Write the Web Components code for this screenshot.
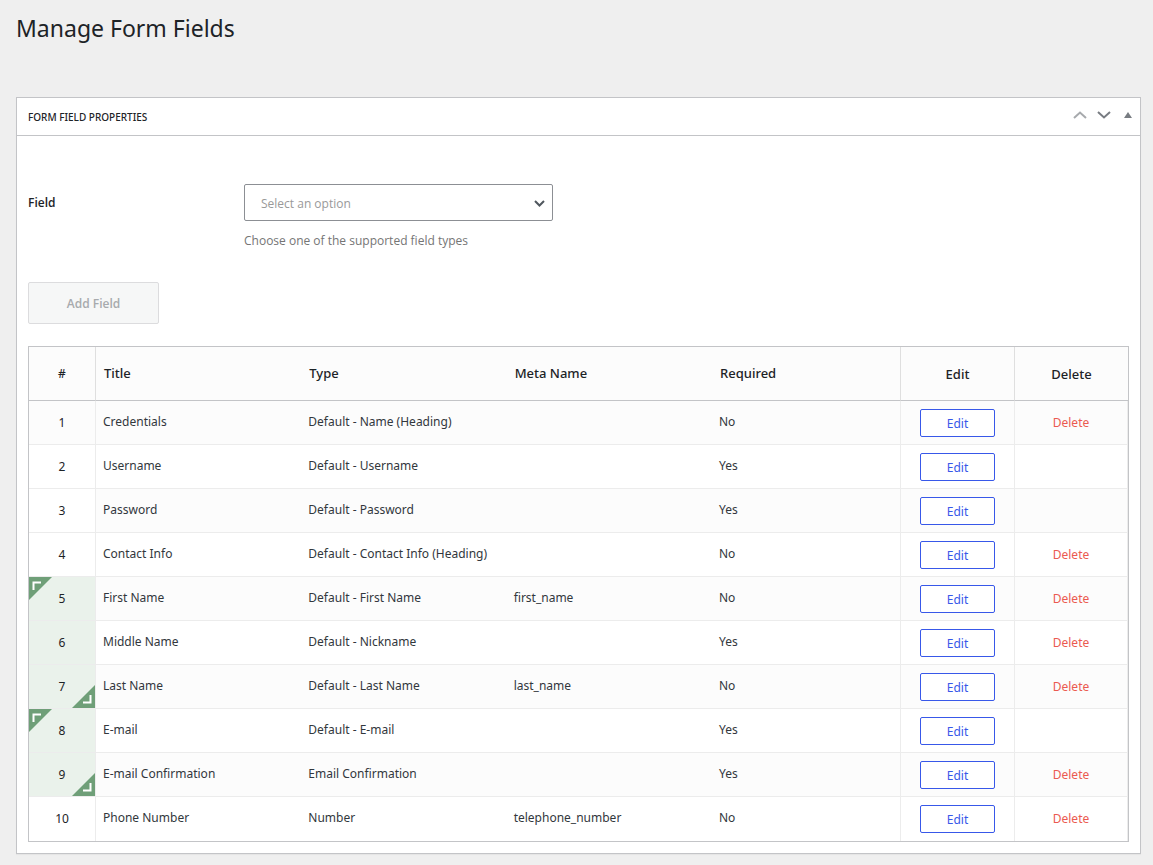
<!DOCTYPE html>
<html lang="en">
<head>
<meta charset="utf-8">
<title>Manage Form Fields</title>
<style>
  body { margin: 0; padding: 12px 12px 12px 16px; background: #efefef; color: #1d2327; font: 12px/20px "Noto Sans", "Open Sans", sans-serif; }
</style>
</head>
<body>
<page-heading>Manage Form Fields</page-heading>
<meta-box>
  <span slot="title">Form Field Properties</span>
  <field-picker></field-picker>
  <field-table></field-table>
</meta-box>

<script>
const define = (name, html, setup) => {
  const template = document.createElement('template');
  template.innerHTML = html;
  customElements.define(name, class extends HTMLElement {
    constructor() {
      super();
      this.attachShadow({ mode: 'open' }).append(template.content.cloneNode(true));
      if (setup) setup(this.shadowRoot);
    }
  });
};

define('page-heading', `
  <style>
    :host { display: block; margin-bottom: 53px; }
    h1 { margin: 0; font-size: 23px; font-weight: 400; line-height: 32px; }
  </style>
  <h1><slot></slot></h1>`);

define('meta-box', `
  <style>
    :host { display: block; background: #fff; border: 1px solid #c3c4c7; box-shadow: 0 1px 1px rgba(0,0,0,.04); }
    header { display: flex; align-items: center; justify-content: space-between; height: 37px; padding: 0 2px 0 11px; border-bottom: 1px solid #c3c4c7; }
    h2 { margin: 0; font-size: 10px; font-weight: 500; line-height: 20px; text-transform: uppercase; }
    .handles { display: flex; gap: 4px; padding-bottom: 3px; }
    button { display: grid; place-items: center; width: 20px; height: 20px; padding: 0; border: 0; background: none; color: #787c82; }
    button:disabled { color: #a7aaad; }
    .body { padding: 48px 11px 11px; }
  </style>
  <header>
    <h2><slot name="title"></slot></h2>
    <div class="handles">
      <button disabled aria-label="Move up"><svg width="14" height="8" viewBox="0 0 14 8" fill="none" stroke="currentColor" stroke-width="2"><path d="M1 7l6-5.500 6 5.500"/></svg></button>
      <button aria-label="Move down"><svg width="14" height="8" viewBox="0 0 14 8" fill="none" stroke="currentColor" stroke-width="2"><path d="M1 1l6 5.500 6-5.500"/></svg></button>
      <button aria-label="Toggle panel"><svg width="8" height="6" viewBox="0 0 8 6" fill="currentColor"><path d="M4 0l4 6H0z"/></svg></button>
    </div>
  </header>
  <div class="body"><slot></slot></div>`);

define('field-picker', `
  <style>
    :host { display: block; margin-bottom: 22px; font-family: "Open Sans", "Noto Sans", sans-serif; }
    .row { display: grid; grid-template-columns: 216px 309px; margin-bottom: 31px; }
    label { font-weight: 600; line-height: 37px; }
    .select { display: grid; position: relative; }
    select { appearance: none; box-sizing: border-box; width: 100%; height: 37px; margin: 0; padding: 2px 32px 0 16px; border: 1px solid #8c8f94; border-radius: 2px; background: #fff; color: #999; font: inherit; }
    svg { position: absolute; right: 8px; top: 16px; }
    p { margin: 10px 0 0; color: #757575; }
    .add { box-sizing: border-box; display: block; width: 131px; height: 42px; padding: 2px 0 0; border: 1px solid #dcdcde; border-radius: 2px; background: #f6f7f7; color: #a7aaad; font: inherit; font-weight: 600; }
  </style>
  <div class="row">
    <label for="field">Field</label>
    <div>
      <div class="select">
        <select id="field"><option>Select an option</option></select>
        <svg width="11" height="7" viewBox="0 0 11 7" fill="none" stroke="#50575e" stroke-width="2"><path d="M1 1l4.500 4.500L10 1"/></svg>
      </div>
      <p>Choose one of the supported field types</p>
    </div>
  </div>
  <button class="add" disabled>Add Field</button>`);

const fields = [
  ['Credentials', 'Default - Name (Heading)', '', 'No', true],
  ['Username', 'Default - Username', '', 'Yes', false],
  ['Password', 'Default - Password', '', 'Yes', false],
  ['Contact Info', 'Default - Contact Info (Heading)', '', 'No', true],
  ['First Name', 'Default - First Name', 'first_name', 'No', true, 'group start'],
  ['Middle Name', 'Default - Nickname', '', 'Yes', true, 'group'],
  ['Last Name', 'Default - Last Name', 'last_name', 'No', true, 'group end'],
  ['E-mail', 'Default - E-mail', '', 'Yes', false, 'group start'],
  ['E-mail Confirmation', 'Email Confirmation', '', 'Yes', true, 'group end'],
  ['Phone Number', 'Number', 'telephone_number', 'No', true],
];
const corner = `<svg width="23" height="23" viewBox="0 0 23 23"><path d="M0 0h23L0 23z" fill="#6f9f78"/><path d="M4.500 13V5.500H12" fill="none" stroke="#fff" stroke-width="2"/></svg>`;

define('field-table', `
  <style>
    :host { display: block; }
    table { box-sizing: border-box; width: 100%; table-layout: fixed; border: 1px solid #c3c4c7; border-collapse: separate; border-spacing: 0; }
    .num { width: 67px; } .req { width: 189px; } .edit { width: 114px; } .del { width: 113px; }
    th, td { box-sizing: border-box; text-align: left; }
    th { height: 54px; padding: 0 8px 2px; background: #fcfcfc; border-bottom: 1px solid #c3c4c7; font-size: 13px; font-weight: 500; }
    td { height: 44px; padding: 0 7px 2px; border-bottom: 1px solid #ececec; color: #32373c; }
    tbody tr:nth-child(odd) { background: #fcfcfc; }
    tbody tr:last-child td { border-bottom: 0; }
    th:first-child, td:first-child, th:nth-child(n+6), td:nth-child(n+6) { padding: 0; text-align: center; }
    th:first-child { font-size: 12px; }
    td:first-child { background: #fff; color: #1d2327; }
    tbody tr:first-child td:first-child { background: #fcfcfc; }
    th:first-child, td:first-child, th:nth-child(n+5), td:nth-child(n+5) { border-right: 1px solid #ececec; }
    th:first-child, th:nth-child(n+5) { border-right-color: #dfdfdf; }
    th:last-child { border-right: 0; }
    .group td:first-child { position: relative; background: #eaf2eb; }
    .group svg { position: absolute; left: 0; top: 0; }
    .end svg { left: auto; right: 0; top: auto; bottom: 0; transform: rotate(180deg); }
    a { display: block; text-decoration: none; }
    .btn { box-sizing: border-box; width: 75px; height: 28px; margin: 0 auto; border: 1px solid #3858e9; border-radius: 2px; background: #fff; color: #3858e9; line-height: 27px; }
    .remove { color: #eb5a50; }
  </style>
  <table>
    <colgroup><col class="num"><col><col><col><col class="req"><col class="edit"><col class="del"></colgroup>
    <thead><tr><th>#</th><th>Title</th><th>Type</th><th>Meta Name</th><th>Required</th><th>Edit</th><th>Delete</th></tr></thead>
    <tbody></tbody>
  </table>`, root => {
  root.querySelector('tbody').innerHTML = fields.map(([title, type, meta, required, removable, group = ''], i) => `
    <tr class="${group}"><td>${i + 1}${/start|end/.test(group) ? corner : ''}</td><td>${title}</td><td>${type}</td><td>${meta}</td><td>${required}</td>
    <td><a class="btn" href="#edit">Edit</a></td><td>${removable ? '<a class="remove" href="#delete">Delete</a>' : ''}</td></tr>`).join('');
});
</script>
</body>
</html>
